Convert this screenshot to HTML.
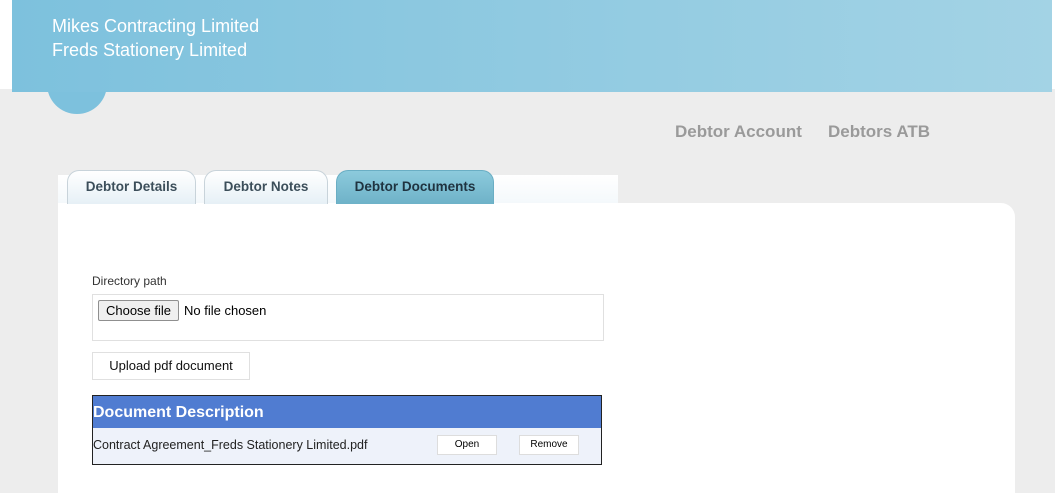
<!DOCTYPE html>
<html><head><style>
body{margin:0;width:1055px;height:486px;overflow:hidden;background:#ededed;font-family:"Liberation Sans",sans-serif;position:relative}
.topw{position:absolute;left:0;top:0;width:1055px;height:89px;background:#fff}
.hdr{position:absolute;left:12px;top:0;width:1040px;height:92px;background:linear-gradient(90deg,#7dc1dd,#a3d3e5)}
.hdr div{position:absolute;left:40px;color:#fff;font-size:18px}
.circ{position:absolute;left:47px;top:54px;width:60px;height:60px;border-radius:50%;background:#7dc1dd}
.nav{position:absolute;top:122px;font-size:17px;font-weight:bold;color:#9a9a9a}
.strip{position:absolute;left:58px;top:175px;width:560px;height:30px;background:linear-gradient(#fff,#f3f8fb)}
.card{position:absolute;left:58px;top:203px;width:957px;height:290px;background:#fff;border-top-right-radius:14px}
.tab{position:absolute;top:170px;height:34px;border:1px solid #c8d3da;border-bottom:none;border-radius:12px 12px 0 0;background:linear-gradient(#fff,#e6f0f6);font-size:13.5px;font-weight:bold;color:#3c4e5a;text-align:center;line-height:32px;box-sizing:border-box}
.tab.act{background:linear-gradient(#8ccadc,#6eb2c8);border-color:#6aaec4;color:#1f3340}
</style></head><body>
<div class="topw"></div>
<div class="circ"></div>
<div class="hdr"><div style="top:16px">Mikes Contracting Limited</div><div style="top:40px">Freds Stationery Limited</div></div>
<div class="nav" style="left:675px">Debtor Account</div>
<div class="nav" style="left:828px">Debtors ATB</div>
<div class="strip"></div>
<div class="card"></div>
<div class="tab" style="left:67px;width:129px">Debtor Details</div>
<div class="tab" style="left:204px;width:124px">Debtor Notes</div>
<div class="tab act" style="left:336px;width:158px">Debtor Documents</div>
<div style="position:absolute;left:92px;top:274px;font-size:12px;color:#333">Directory path</div>
<div style="position:absolute;left:92px;top:294px;width:510px;height:45px;border:1px solid #e0e0e0"></div>
<div style="position:absolute;left:98px;top:300px;width:79px;height:19px;border:1px solid #8f8f8f;border-radius:2px;background:#efefef;font-size:13px;line-height:19px;text-align:center;color:#000">Choose file</div>
<div style="position:absolute;left:184px;top:303px;font-size:13px;color:#000">No file chosen</div>
<div style="position:absolute;left:92px;top:352px;width:156px;height:26px;border:1px solid #e0e0e0;font-size:13px;line-height:26px;text-align:center;color:#111">Upload pdf document</div>
<div style="position:absolute;left:92px;top:395px;width:508px;height:68px;border:1px solid #222;background:#eef2fa">
<div style="height:32px;background:#507cd1;color:#fff;font-weight:bold;font-size:16px;line-height:34px">Document Description</div>
<div style="position:absolute;left:0;top:42px;font-size:12.5px;color:#222">Contract Agreement_Freds Stationery Limited.pdf</div>
<div style="position:absolute;left:344px;top:39px;width:58px;height:18px;background:#fff;border:1px solid #ddd;font-size:10px;line-height:18px;text-align:center">Open</div>
<div style="position:absolute;left:426px;top:39px;width:58px;height:18px;background:#fff;border:1px solid #ddd;font-size:10px;line-height:18px;text-align:center">Remove</div>
</div>
</body></html>
